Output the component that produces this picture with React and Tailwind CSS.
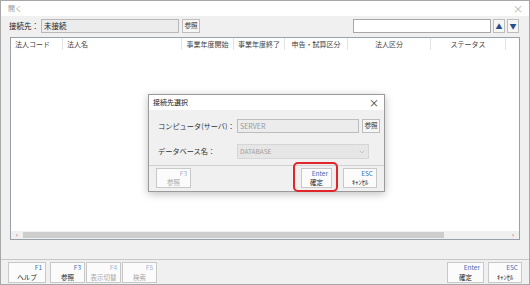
import { ChevronDown } from "lucide-react";

const font = { fontFamily: '"Noto Sans CJK JP", "Noto Sans", sans-serif' };

const columns = [
  { label: "法人コード", w: "w-[52px]", align: "justify-start pl-[4px]" },
  { label: "法人名", w: "w-[119px]", align: "justify-start pl-[4px]" },
  { label: "事業年度開始", w: "w-[52px]", align: "justify-center" },
  { label: "事業年度終了", w: "w-[51px]", align: "justify-center" },
  { label: "申告・試算区分", w: "w-[63px]", align: "justify-center" },
  { label: "法人区分", w: "w-[83px]", align: "justify-center" },
  { label: "ステータス", w: "w-[75px]", align: "justify-center" },
];

const FnButton = ({ keyName, label, disabled, className = "" }) => (
  <div
    className={`flex flex-col justify-between border border-[#c8c8c8] bg-[#fbfbfb] px-[3px] py-[1px] leading-[7px] ${className}`}
  >
    <span
      className={`self-end text-[6.5px] ${disabled ? "text-[#9db3d3]" : "text-[#3b6fb6]"}`}
    >
      {keyName}
    </span>
    <span
      className={`self-center whitespace-nowrap text-[6.5px] ${disabled ? "text-[#a8a8a8]" : "text-[#222]"}`}
    >
      {label}
    </span>
  </div>
);

const ConnectDialog = () => (
  <div className="absolute left-[147px] top-[93px] flex h-[98px] w-[237px] flex-col border border-[#9a9a9a] bg-[#f0f0f0] shadow-[0_2px_8px_rgba(0,0,0,0.25)]">
    <div className="flex h-[15px] items-center justify-between bg-white pl-[4px] pr-[5px]">
      <span className="text-[7px] text-[#222]">接続先選択</span>
      <span className="text-[10px] leading-none text-[#333]">×</span>
    </div>
    <div className="flex items-center pl-[9px] pt-[9px]">
      <span className="w-[79px] whitespace-nowrap text-[7.2px] text-[#333]">コンピュータ(サーバ)：</span>
      <div className="flex h-[14px] w-[122px] items-center border border-[#bdbdbd] bg-[#ececec] px-[2px] text-[7px] text-[#9a9a9a]">
        SERVER
      </div>
      <div className="ml-[3px] flex h-[14px] w-[18px] items-center justify-center border border-[#bdbdbd] bg-[#f6f6f6] text-[6.5px] text-[#333]">
        参照
      </div>
    </div>
    <div className="flex items-center pl-[9px] pt-[11px]">
      <span className="w-[79px] whitespace-nowrap text-[7.2px] text-[#333]">データベース名：</span>
      <div className="flex h-[15px] w-[132px] items-center justify-between border border-[#d6d6d6] bg-[#e6e6e6] px-[2px] text-[6.5px] text-[#a0a0a0]">
        DATABASE
        <ChevronDown size={8} strokeWidth={1.5} className="text-[#a0a0a0]" />
      </div>
    </div>
    <div className="mt-[6px] border-t border-[#d0d0d0]" />
    <div className="flex items-start px-[7px] pt-[2px]">
      <FnButton keyName="F3" label="参照" disabled className="h-[20px] w-[35px]" />
      <div className="flex-1" />
      <div className="relative">
        <div className="absolute -left-[8px] -top-[6px] h-[30px] w-[45px] rounded-[5px] border-2 border-[#e0262b]" />
        <FnButton keyName="Enter" label="確定" className="h-[20px] w-[31px]" />
      </div>
      <FnButton keyName="ESC" label="ｷｬﾝｾﾙ" className="ml-[11px] h-[20px] w-[34px]" />
    </div>
  </div>
);

export default function App() {
  return (
    <div
      style={font}
      className="relative flex h-[285px] w-[530px] flex-col border border-[#a8a8a8] bg-[#f0f0f0]"
    >
      <div className="flex h-[15px] items-center justify-between bg-white pl-[7px] pr-[6px]">
        <span className="text-[7px] text-[#9a9a9a]">開く</span>
        <span className="text-[10px] leading-none text-[#b0b0b0]">×</span>
      </div>
      <div className="flex items-center pl-[8px] pr-[10px] pt-[3px]">
        <span className="w-[32px] whitespace-nowrap text-[7.5px] text-[#222]">接続先：</span>
        <div className="flex h-[14px] w-[138px] items-center border border-[#b8b8b8] bg-[#ececec] px-[2px] text-[7.5px] text-[#222]">
          未接続
        </div>
        <div className="ml-[3px] flex h-[14px] w-[18px] items-center justify-center border border-[#bdbdbd] bg-[#f6f6f6] text-[6.5px] text-[#333]">
          参照
        </div>
        <div className="flex-1" />
        <div className="h-[14px] w-[138px] border border-[#a8a8a8] bg-white" />
        <div className="ml-[2px] flex h-[14px] w-[12px] items-center justify-center border border-[#bdbdbd] bg-[#f6f6f6] text-[7px] leading-none text-[#1f4f8f]">
          ▲
        </div>
        <div className="ml-[2px] flex h-[14px] w-[12px] items-center justify-center border border-[#bdbdbd] bg-[#f6f6f6] text-[7px] leading-none text-[#1f4f8f]">
          ▼
        </div>
      </div>
      <div className="mx-[9px] mt-[4px] flex h-[203px] flex-col border border-[#9aa0a8] bg-white">
        <div className="flex h-[12px]">
          {columns.map((c) => (
            <div
              key={c.label}
              className={`flex items-center whitespace-nowrap border-r border-[#e3e3e3] text-[7px] text-[#444] ${c.w} ${c.align}`}
            >
              {c.label}
            </div>
          ))}
        </div>
        <div className="flex-1" />
        <div className="flex h-[8px] items-center bg-[#f0f0f0]">
          <span className="w-[12px] text-center text-[6px] leading-none text-[#555]">‹</span>
          <div className="h-[6px] w-[421px] bg-[#cdcdcd]" />
          <div className="flex-1" />
          <span className="w-[12px] text-center text-[6px] leading-none text-[#555]">›</span>
        </div>
      </div>
      <div className="flex-1" />
      <div className="flex items-start border-t border-[#c8c8c8] px-[7px] pb-[1px] pt-[2px]">
        <FnButton keyName="F1" label="ヘルプ" className="h-[21px] w-[38px]" />
        <FnButton keyName="F3" label="参照" className="ml-[4px] h-[21px] w-[35px]" />
        <FnButton keyName="F4" label="表示切替" disabled className="ml-[1px] h-[21px] w-[35px]" />
        <FnButton keyName="F5" label="検索" disabled className="ml-[1px] h-[21px] w-[35px]" />
        <div className="flex-1" />
        <FnButton keyName="Enter" label="確定" className="h-[21px] w-[37px]" />
        <FnButton keyName="ESC" label="ｷｬﾝｾﾙ" className="ml-[4px] h-[21px] w-[34px]" />
      </div>
      <ConnectDialog />
    </div>
  );
}
